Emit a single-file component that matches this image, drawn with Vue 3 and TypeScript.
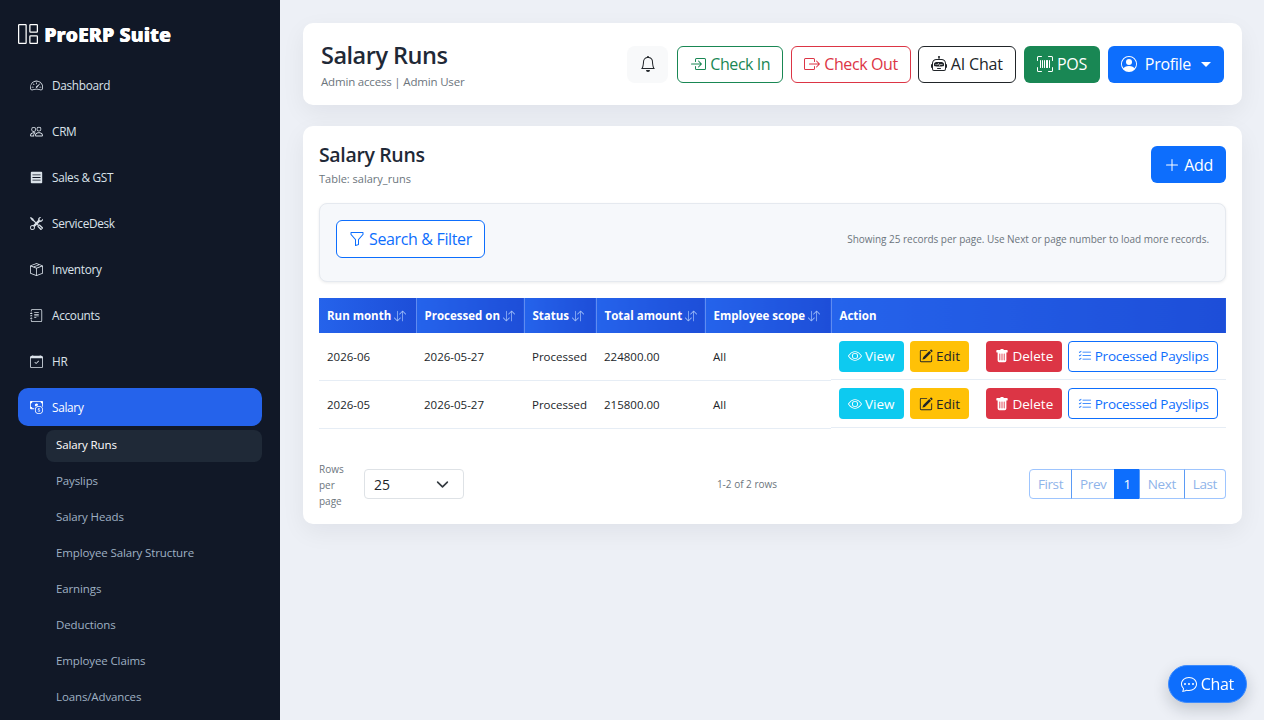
<script setup lang="ts">
import { ref } from 'vue'

type NavItem = { label: string; icon: string[]; active?: boolean }

const icons: Record<string, string[]> = {
  dashboard: [
    'M8 4a.5.5 0 0 1 .5.5V6a.5.5 0 0 1-1 0V4.5A.5.5 0 0 1 8 4zM3.732 5.732a.5.5 0 0 1 .707 0l.915.914a.5.5 0 1 1-.708.708l-.914-.915a.5.5 0 0 1 0-.707zM2 10a.5.5 0 0 1 .5-.5h1.586a.5.5 0 0 1 0 1H2.5A.5.5 0 0 1 2 10zm9.5 0a.5.5 0 0 1 .5-.5h1.5a.5.5 0 0 1 0 1H12a.5.5 0 0 1-.5-.5zm.754-4.246a.389.389 0 0 0-.527-.02L7.547 9.31a.91.91 0 1 0 1.302 1.258l3.434-4.297a.389.389 0 0 0-.029-.518z',
    'M0 10a8 8 0 1 1 15.547 2.661c-.442 1.253-1.845 1.602-2.932 1.25C11.309 13.488 9.475 13 8 13c-1.474 0-3.31.488-4.615.911-1.087.352-2.49.003-2.932-1.25A7.988 7.988 0 0 1 0 10zm8-7a7 7 0 0 0-6.603 9.329c.203.575.923.876 1.68.63C4.397 12.533 6.358 12 8 12s3.604.532 4.923.96c.757.245 1.477-.056 1.68-.631A7 7 0 0 0 8 3z',
  ],
  people: [
    'M15 14s1 0 1-1-1-4-5-4-5 3-5 4 1 1 1 1h8Zm-7.978-1A.261.261 0 0 1 7 12.996c.001-.264.167-1.03.76-1.72C8.312 10.629 9.282 10 11 10c1.717 0 2.687.63 3.24 1.276.593.69.758 1.457.76 1.72l-.008.002a.274.274 0 0 1-.014.002H7.022ZM11 7a2 2 0 1 0 0-4 2 2 0 0 0 0 4Zm3-2a3 3 0 1 1-6 0 3 3 0 0 1 6 0ZM6.936 9.28a5.88 5.88 0 0 0-1.23-.247A7.35 7.35 0 0 0 5 9c-4 0-5 3-5 4 0 .667.333 1 1 1h4.216A2.238 2.238 0 0 1 5 13c0-1.01.377-2.042 1.09-2.904.243-.294.526-.569.846-.816ZM4.92 10A5.493 5.493 0 0 0 4 13H1c0-.26.164-1.03.76-1.724.545-.636 1.492-1.256 3.16-1.275ZM1.5 5.5a3 3 0 1 1 6 0 3 3 0 0 1-6 0Zm3-2a2 2 0 1 0 0 4 2 2 0 0 0 0-4Z',
  ],
  sales: ['M1 2a1 1 0 0 1 1-1h12a1 1 0 0 1 1 1v12a1 1 0 0 1-1 1H2a1 1 0 0 1-1-1V2Zm2 2.2v1h10v-1H3Zm0 3.3v1h10v-1H3Zm0 3.3v1h10v-1H3Z'],
  tools: [
    'M1 0 0 1l2.2 3.081a1 1 0 0 0 .815.419h.07a1 1 0 0 1 .708.293l2.675 2.675-2.617 2.654A3.003 3.003 0 0 0 0 13a3 3 0 1 0 5.878-.851l2.654-2.617.968.968-.305.914a1 1 0 0 0 .242 1.023l3.27 3.27a.997.997 0 0 0 1.414 0l1.586-1.586a.997.997 0 0 0 0-1.414l-3.27-3.27a1 1 0 0 0-1.023-.242L10.5 9.5l-.96-.96 2.68-2.643A3.005 3.005 0 0 0 16 3c0-.269-.035-.53-.102-.777l-2.14 2.141L12 4l-.364-1.757L13.777.102a3 3 0 0 0-3.675 3.68L7.462 6.46 4.793 3.793a1 1 0 0 1-.293-.707v-.071a1 1 0 0 0-.419-.814L1 0Zm9.646 10.646a.5.5 0 0 1 .708 0l2.914 2.915a.5.5 0 0 1-.707.707l-2.915-2.914a.5.5 0 0 1 0-.708ZM3 11l.471.242.529.026.287.445.445.287.026.529L5 13l-.242.471-.026.529-.445.287-.287.445-.529.026L3 15l-.471-.242L2 14.732l-.287-.445L1.268 14l-.026-.529L1 13l.242-.471.026-.529.445-.287.287-.445.529-.026L3 11Z',
  ],
  box: [
    'M8.186 1.113a.5.5 0 0 0-.372 0L1.846 3.5l2.404.961L10.404 2l-2.218-.887zm3.564 1.426L5.596 5 8 5.961 14.154 3.5l-2.404-.961zm3.25 1.7-6.5 2.6v7.922l6.5-2.6V4.24zM7.5 14.762V6.838L1 4.239v7.925l6.5 2.6zM7.443.184a1.5 1.5 0 0 1 1.114 0l7.129 2.852A.5.5 0 0 1 16 3.5v8.662a1 1 0 0 1-.629.928l-7.185 2.874a.5.5 0 0 1-.372 0L.63 13.09a1 1 0 0 1-.63-.928V3.5a.5.5 0 0 1 .314-.464L7.443.184z',
  ],
  journal: [
    'M5 10.5a.5.5 0 0 1 .5-.5h2a.5.5 0 0 1 0 1h-2a.5.5 0 0 1-.5-.5zm0-2a.5.5 0 0 1 .5-.5h5a.5.5 0 0 1 0 1h-5a.5.5 0 0 1-.5-.5zm0-2a.5.5 0 0 1 .5-.5h5a.5.5 0 0 1 0 1h-5a.5.5 0 0 1-.5-.5zm0-2a.5.5 0 0 1 .5-.5h5a.5.5 0 0 1 0 1h-5a.5.5 0 0 1-.5-.5z',
    'M3 0h10a2 2 0 0 1 2 2v12a2 2 0 0 1-2 2H3a2 2 0 0 1-2-2v-1h1v1a1 1 0 0 0 1 1h10a1 1 0 0 0 1-1V2a1 1 0 0 0-1-1H3a1 1 0 0 0-1 1v1H1V2a2 2 0 0 1 2-2z',
    'M1 5v-.5a.5.5 0 0 1 1 0V5h.5a.5.5 0 0 1 0 1h-2a.5.5 0 0 1 0-1H1zm0 3v-.5a.5.5 0 0 1 1 0V8h.5a.5.5 0 0 1 0 1h-2a.5.5 0 0 1 0-1H1zm0 3v-.5a.5.5 0 0 1 1 0v.5h.5a.5.5 0 0 1 0 1h-2a.5.5 0 0 1 0-1H1z',
  ],
  calendar: [
    'M10.854 7.146a.5.5 0 0 1 0 .708l-3 3a.5.5 0 0 1-.708 0l-1.5-1.5a.5.5 0 1 1 .708-.708L7.5 9.793l2.646-2.647a.5.5 0 0 1 .708 0z',
    'M3.5 0a.5.5 0 0 1 .5.5V1h8V.5a.5.5 0 0 1 1 0V1h1a2 2 0 0 1 2 2v11a2 2 0 0 1-2 2H2a2 2 0 0 1-2-2V3a2 2 0 0 1 2-2h1V.5a.5.5 0 0 1 .5-.5zM1 4v10a1 1 0 0 0 1 1h12a1 1 0 0 0 1-1V4H1z',
  ],
  cash: [
    'M11 15a4 4 0 1 0 0-8 4 4 0 0 0 0 8zm5-4a5 5 0 1 1-10 0 5 5 0 0 1 10 0z',
    'M9.438 11.944c.047.596.518 1.06 1.363 1.116v.44h.375v-.443c.875-.061 1.386-.529 1.386-1.207 0-.618-.39-.936-1.09-1.1l-.296-.07v-1.2c.376.043.614.248.671.532h.658c-.047-.575-.54-1.024-1.329-1.073V8.5h-.375v.45c-.747.073-1.255.522-1.255 1.158 0 .562.378.92 1.007 1.066l.248.061v1.272c-.384-.058-.639-.27-.696-.563h-.668zm1.36-1.354c-.369-.085-.569-.26-.569-.522 0-.294.216-.514.572-.578v1.1h-.003zm.432.746c.449.104.655.272.655.569 0 .339-.257.571-.709.635v-1.195l.054.012z',
    'M1 0a1 1 0 0 0-1 1v8a1 1 0 0 0 1 1h4.083c.058-.344.145-.678.258-1H3a2 2 0 0 0-2-2V3a2 2 0 0 0 2-2h10a2 2 0 0 0 2 2v3.528c.38.34.717.728 1 1.154V1a1 1 0 0 0-1-1H1z',
    'M9.998 5.083 10 5a2 2 0 1 0-3.132 1.65 5.982 5.982 0 0 1 3.13-1.567z',
  ],
  brand: [
    'M6 1H1v14h5V1zm9 0h-5v5h5V1zm0 9v5h-5v-5h5zM0 1a1 1 0 0 1 1-1h5a1 1 0 0 1 1 1v14a1 1 0 0 1-1 1H1a1 1 0 0 1-1-1V1zm9 0a1 1 0 0 1 1-1h5a1 1 0 0 1 1 1v5a1 1 0 0 1-1 1h-5a1 1 0 0 1-1-1V1zm1 8a1 1 0 0 0-1 1v5a1 1 0 0 0 1 1h5a1 1 0 0 0 1-1v-5a1 1 0 0 0-1-1h-5z',
  ],
  bell: [
    'M8 16a2 2 0 0 0 2-2H6a2 2 0 0 0 2 2zM8 1.918l-.797.161A4.002 4.002 0 0 0 4 6c0 .628-.134 2.197-.459 3.742-.16.767-.376 1.566-.663 2.258h10.244c-.287-.692-.502-1.49-.663-2.258C12.134 8.197 12 6.628 12 6a4.002 4.002 0 0 0-3.203-3.92L8 1.917zM14.22 12c.223.447.481.801.78 1H1c.299-.199.557-.553.78-1C2.68 10.2 3 6.88 3 6c0-2.42 1.72-4.44 4.005-4.901a1 1 0 1 1 1.99 0A5.002 5.002 0 0 1 13 6c0 .88.32 4.2 1.22 6z',
  ],
  checkIn: [
    'M6 3.5a.5.5 0 0 1 .5-.5h8a.5.5 0 0 1 .5.5v9a.5.5 0 0 1-.5.5h-8a.5.5 0 0 1-.5-.5v-2a.5.5 0 0 0-1 0v2A1.5 1.5 0 0 0 6.5 14h8a1.5 1.5 0 0 0 1.5-1.5v-9A1.5 1.5 0 0 0 14.5 2h-8A1.5 1.5 0 0 0 5 3.5v2a.5.5 0 0 0 1 0v-2z',
    'M11.854 8.354a.5.5 0 0 0 0-.708l-3-3a.5.5 0 1 0-.708.708L10.293 7.5H1.5a.5.5 0 0 0 0 1h8.793l-2.147 2.146a.5.5 0 0 0 .708.708l3-3z',
  ],
  checkOut: [
    'M10 12.5a.5.5 0 0 1-.5.5h-8a.5.5 0 0 1-.5-.5v-9a.5.5 0 0 1 .5-.5h8a.5.5 0 0 1 .5.5v2a.5.5 0 0 0 1 0v-2A1.5 1.5 0 0 0 9.5 2h-8A1.5 1.5 0 0 0 0 3.5v9A1.5 1.5 0 0 0 1.5 14h8a1.5 1.5 0 0 0 1.5-1.5v-2a.5.5 0 0 0-1 0v2z',
    'M15.854 8.354a.5.5 0 0 0 0-.708l-3-3a.5.5 0 0 0-.708.708L14.293 7.5H5.5a.5.5 0 0 0 0 1h8.793l-2.147 2.146a.5.5 0 0 0 .708.708l3-3z',
  ],
  robot: [
    'M6 12.5a.5.5 0 0 1 .5-.5h3a.5.5 0 0 1 0 1h-3a.5.5 0 0 1-.5-.5ZM3 8.062C3 6.76 4.235 5.765 5.53 5.886a26.58 26.58 0 0 0 4.94 0C11.765 5.765 13 6.76 13 8.062v1.157a.933.933 0 0 1-.765.935c-.845.147-2.34.346-4.235.346-1.895 0-3.39-.2-4.235-.346A.933.933 0 0 1 3 9.219V8.062Zm4.542-.827a.25.25 0 0 0-.217.068l-.92.9a24.767 24.767 0 0 1-1.871-.183.25.25 0 0 0-.068.495c.55.076 1.232.149 2.02.193a.25.25 0 0 0 .189-.071l.754-.736.847 1.71a.25.25 0 0 0 .404.062l.932-.97a25.286 25.286 0 0 0 1.922-.188.25.25 0 0 0-.068-.495c-.538.074-1.207.145-1.98.189a.25.25 0 0 0-.166.076l-.754.785-.842-1.7a.25.25 0 0 0-.182-.135Z',
    'M8.5 1.866a1 1 0 1 0-1 0V3h-2A4.5 4.5 0 0 0 1 7.5V8a1 1 0 0 0-1 1v2a1 1 0 0 0 1 1v1a2 2 0 0 0 2 2h10a2 2 0 0 0 2-2v-1a1 1 0 0 0 1-1V9a1 1 0 0 0-1-1v-.5A4.5 4.5 0 0 0 10.5 3h-2V1.866ZM14 7.5V13a1 1 0 0 1-1 1H3a1 1 0 0 1-1-1V7.5A3.5 3.5 0 0 1 5.5 4h5A3.5 3.5 0 0 1 14 7.5Z',
  ],
  upc: [
    'M1.5 1a.5.5 0 0 0-.5.5v3a.5.5 0 0 1-1 0v-3A1.5 1.5 0 0 1 1.5 0h3a.5.5 0 0 1 0 1h-3zM11 .5a.5.5 0 0 1 .5-.5h3A1.5 1.5 0 0 1 16 1.5v3a.5.5 0 0 1-1 0v-3a.5.5 0 0 0-.5-.5h-3a.5.5 0 0 1-.5-.5zM.5 11a.5.5 0 0 1 .5.5v3a.5.5 0 0 0 .5.5h3a.5.5 0 0 1 0 1h-3A1.5 1.5 0 0 1 0 14.5v-3a.5.5 0 0 1 .5-.5zm15 0a.5.5 0 0 1 .5.5v3a1.5 1.5 0 0 1-1.5 1.5h-3a.5.5 0 0 1 0-1h3a.5.5 0 0 0 .5-.5v-3a.5.5 0 0 1 .5-.5zM3 4.5a.5.5 0 0 1 1 0v7a.5.5 0 0 1-1 0v-7zm2 0a.5.5 0 0 1 1 0v7a.5.5 0 0 1-1 0v-7zm2 0a.5.5 0 0 1 1 0v7a.5.5 0 0 1-1 0v-7zm2 0a.5.5 0 0 1 .5-.5h1a.5.5 0 0 1 .5.5v7a.5.5 0 0 1-.5.5h-1a.5.5 0 0 1-.5-.5v-7zm3 0a.5.5 0 0 1 1 0v7a.5.5 0 0 1-1 0v-7z',
  ],
  person: [
    'M11 6a3 3 0 1 1-6 0 3 3 0 0 1 6 0z',
    'M0 8a8 8 0 1 1 16 0A8 8 0 0 1 0 8zm8-7a7 7 0 0 0-5.468 11.37C3.242 11.226 4.805 10 8 10s4.757 1.225 5.468 2.37A7 7 0 0 0 8 1z',
  ],
  plus: ['M8 2a.5.5 0 0 1 .5.5v5h5a.5.5 0 0 1 0 1h-5v5a.5.5 0 0 1-1 0v-5h-5a.5.5 0 0 1 0-1h5v-5A.5.5 0 0 1 8 2Z'],
  funnel: [
    'M1.5 1.5A.5.5 0 0 1 2 1h12a.5.5 0 0 1 .5.5v2a.5.5 0 0 1-.128.334L10 8.692V13.5a.5.5 0 0 1-.342.474l-3 1A.5.5 0 0 1 6 14.5V8.692L1.628 3.834A.5.5 0 0 1 1.5 3.5v-2zm1 .5v1.308l4.372 4.858A.5.5 0 0 1 7 8.5v5.306l2-.666V8.5a.5.5 0 0 1 .128-.334L13.5 3.308V2h-11z',
  ],
  eye: [
    'M16 8s-3-5.5-8-5.5S0 8 0 8s3 5.5 8 5.5S16 8 16 8zM1.173 8a13.133 13.133 0 0 1 1.66-2.043C4.12 4.668 5.88 3.5 8 3.5c2.12 0 3.879 1.168 5.168 2.457A13.133 13.133 0 0 1 14.828 8c-.058.087-.122.183-.195.288-.335.48-.83 1.12-1.465 1.755C11.879 11.332 10.119 12.5 8 12.5c-2.12 0-3.879-1.168-5.168-2.457A13.134 13.134 0 0 1 1.172 8z',
    'M8 5.5a2.5 2.5 0 1 0 0 5 2.5 2.5 0 0 0 0-5zM4.5 8a3.5 3.5 0 1 1 7 0 3.5 3.5 0 0 1-7 0z',
  ],
  edit: [
    'M15.502 1.94a.5.5 0 0 1 0 .706L14.459 3.69l-2-2L13.502.646a.5.5 0 0 1 .707 0l1.293 1.293zm-1.75 2.456-2-2L4.939 9.21a.5.5 0 0 0-.121.196l-.805 2.414a.25.25 0 0 0 .316.316l2.414-.805a.5.5 0 0 0 .196-.12l6.813-6.814z',
    'M1 13.5A1.5 1.5 0 0 0 2.5 15h11a1.5 1.5 0 0 0 1.5-1.5v-6a.5.5 0 0 0-1 0v6a.5.5 0 0 1-.5.5h-11a.5.5 0 0 1-.5-.5v-11a.5.5 0 0 1 .5-.5H9a.5.5 0 0 0 0-1H2.5A1.5 1.5 0 0 0 1 2.5v11z',
  ],
  trash: [
    'M2.5 1a1 1 0 0 0-1 1v1a1 1 0 0 0 1 1H3v9a2 2 0 0 0 2 2h6a2 2 0 0 0 2-2V4h.5a1 1 0 0 0 1-1V2a1 1 0 0 0-1-1H10a1 1 0 0 0-1-1H7a1 1 0 0 0-1 1H2.5zm3 4a.5.5 0 0 1 .5.5v7a.5.5 0 0 1-1 0v-7a.5.5 0 0 1 .5-.5zM8 5a.5.5 0 0 1 .5.5v7a.5.5 0 0 1-1 0v-7A.5.5 0 0 1 8 5zm3 .5v7a.5.5 0 0 1-1 0v-7a.5.5 0 0 1 1 0z',
  ],
  listCheck: [
    'M5 11.5a.5.5 0 0 1 .5-.5h9a.5.5 0 0 1 0 1h-9a.5.5 0 0 1-.5-.5zm0-4a.5.5 0 0 1 .5-.5h9a.5.5 0 0 1 0 1h-9a.5.5 0 0 1-.5-.5zm0-4a.5.5 0 0 1 .5-.5h9a.5.5 0 0 1 0 1h-9a.5.5 0 0 1-.5-.5zM3.854 2.146a.5.5 0 0 1 0 .708l-1.5 1.5a.5.5 0 0 1-.708 0l-.5-.5a.5.5 0 1 1 .708-.708L2 3.293l1.146-1.147a.5.5 0 0 1 .708 0zm0 4a.5.5 0 0 1 0 .708l-1.5 1.5a.5.5 0 0 1-.708 0l-.5-.5a.5.5 0 1 1 .708-.708L2 7.293l1.146-1.147a.5.5 0 0 1 .708 0zm0 4a.5.5 0 0 1 0 .708l-1.5 1.5a.5.5 0 0 1-.708 0l-.5-.5a.5.5 0 0 1 .708-.708l.146.147 1.146-1.147a.5.5 0 0 1 .708 0z',
  ],
  chat: [
    'M5 8a1 1 0 1 1-2 0 1 1 0 0 1 2 0zm4 0a1 1 0 1 1-2 0 1 1 0 0 1 2 0zm3 1a1 1 0 1 0 0-2 1 1 0 0 0 0 2z',
    'm2.165 15.803.02-.004c1.83-.363 2.948-.842 3.468-1.105A9.06 9.06 0 0 0 8 15c4.418 0 8-3.134 8-7s-3.582-7-8-7-8 3.134-8 7c0 1.76.743 3.37 1.97 4.6a10.437 10.437 0 0 1-.524 2.318l-.003.011a10.722 10.722 0 0 1-.244.637c-.079.186.074.394.273.362a21.673 21.673 0 0 0 .693-.125zm.8-3.108a1 1 0 0 0-.287-.801C1.618 10.83 1 9.468 1 8c0-3.192 3.004-6 7-6s7 2.808 7 6c0 3.193-3.004 6-7 6a8.06 8.06 0 0 1-2.088-.272 1 1 0 0 0-.711.074c-.387.196-1.24.57-2.634.893a10.97 10.97 0 0 0 .398-2z',
  ],
  sort: [
    'M11.5 15a.5.5 0 0 0 .5-.5V2.707l3.146 3.147a.5.5 0 0 0 .708-.708l-4-4a.5.5 0 0 0-.708 0l-4 4a.5.5 0 1 0 .708.708L11 2.707V14.5a.5.5 0 0 0 .5.5zm-7-14a.5.5 0 0 1 .5.5v11.793l3.146-3.147a.5.5 0 0 1 .708.708l-4 4a.5.5 0 0 1-.708 0l-4-4a.5.5 0 0 1 .708-.708L4 13.293V1.5a.5.5 0 0 1 .5-.5z',
  ],
}

const navItems: NavItem[] = [
  { label: 'Dashboard', icon: icons.dashboard },
  { label: 'CRM', icon: icons.people },
  { label: 'Sales & GST', icon: icons.sales },
  { label: 'ServiceDesk', icon: icons.tools },
  { label: 'Inventory', icon: icons.box },
  { label: 'Accounts', icon: icons.journal },
  { label: 'HR', icon: icons.calendar },
  { label: 'Salary', icon: icons.cash, active: true },
]

const subItems = [
  'Salary Runs',
  'Payslips',
  'Salary Heads',
  'Employee Salary Structure',
  'Earnings',
  'Deductions',
  'Employee Claims',
  'Loans/Advances',
]

const columns = ['Run month', 'Processed on', 'Status', 'Total amount', 'Employee scope']

const rows = ref([
  { month: '2026-06', processed: '2026-05-27', status: 'Processed', total: '224800.00', scope: 'All' },
  { month: '2026-05', processed: '2026-05-27', status: 'Processed', total: '215800.00', scope: 'All' },
])

const pages = ['First', 'Prev', '1', 'Next', 'Last']
</script>

<template>
  <div class="shell">
    <aside class="sidebar">
      <div class="brand">
        <svg class="brand-icon" viewBox="0 0 16 16"><path v-for="d in icons.brand" :key="d" :d="d" /></svg>
        <span>ProERP Suite</span>
      </div>
      <nav class="nav">
        <a v-for="item in navItems" :key="item.label" class="nav-link" :class="{ active: item.active }">
          <svg class="ico" viewBox="0 0 16 16"><path v-for="d in item.icon" :key="d" :d="d" /></svg>
          {{ item.label }}
        </a>
        <div class="subnav">
          <a v-for="(sub, i) in subItems" :key="sub" class="sub-link" :class="{ current: i === 0 }">{{ sub }}</a>
        </div>
      </nav>
    </aside>

    <main class="main">
      <header class="card topbar">
        <div>
          <h1>Salary Runs</h1>
          <div class="muted">Admin access | Admin User</div>
        </div>
        <div class="top-actions">
          <button class="bell">
            <svg class="ico" viewBox="0 0 16 16"><path v-for="d in icons.bell" :key="d" :d="d" /></svg>
          </button>
          <button class="btn out-green">
            <svg class="ico" viewBox="0 0 16 16"><path v-for="d in icons.checkIn" :key="d" :d="d" /></svg>
            Check In
          </button>
          <button class="btn out-red">
            <svg class="ico" viewBox="0 0 16 16"><path v-for="d in icons.checkOut" :key="d" :d="d" /></svg>
            Check Out
          </button>
          <button class="btn out-dark">
            <svg class="ico" viewBox="0 0 16 16"><path v-for="d in icons.robot" :key="d" :d="d" /></svg>
            AI Chat
          </button>
          <button class="btn pos">
            <svg class="ico" viewBox="0 0 16 16"><path v-for="d in icons.upc" :key="d" :d="d" /></svg>
            POS
          </button>
          <button class="btn profile">
            <svg class="ico" viewBox="0 0 16 16"><path v-for="d in icons.person" :key="d" :d="d" /></svg>
            Profile
            <span class="caret"></span>
          </button>
        </div>
      </header>

      <section class="card content">
        <div class="content-head">
          <div>
            <h2>Salary Runs</h2>
            <div class="muted small">Table: salary_runs</div>
          </div>
          <button class="btn add">
            <svg class="ico" viewBox="0 0 16 16"><path v-for="d in icons.plus" :key="d" :d="d" fill-rule="evenodd" /></svg>
            Add
          </button>
        </div>

        <div class="filter">
          <button class="btn out-blue">
            <svg class="ico" viewBox="0 0 16 16"><path v-for="d in icons.funnel" :key="d" :d="d" /></svg>
            Search &amp; Filter
          </button>
          <span class="filter-note">Showing 25 records per page. Use Next or page number to load more records.</span>
        </div>

        <table class="grid">
          <thead>
            <tr>
              <th v-for="col in columns" :key="col">
                {{ col }}
                <svg class="sort" viewBox="0 0 16 16"><path v-for="d in icons.sort" :key="d" :d="d" /></svg>
              </th>
              <th>Action</th>
            </tr>
          </thead>
          <tbody>
            <tr v-for="row in rows" :key="row.month">
              <td>{{ row.month }}</td>
              <td>{{ row.processed }}</td>
              <td>{{ row.status }}</td>
              <td>{{ row.total }}</td>
              <td>{{ row.scope }}</td>
              <td class="actions">
                <button class="act view"><svg class="ico" viewBox="0 0 16 16"><path v-for="d in icons.eye" :key="d" :d="d" /></svg>View</button>
                <button class="act edit"><svg class="ico" viewBox="0 0 16 16"><path v-for="d in icons.edit" :key="d" :d="d" /></svg>Edit</button>
                <button class="act del"><svg class="ico" viewBox="0 0 16 16"><path v-for="d in icons.trash" :key="d" :d="d" /></svg>Delete</button>
                <button class="act slips"><svg class="ico" viewBox="0 0 16 16"><path v-for="d in icons.listCheck" :key="d" :d="d" /></svg>Processed Payslips</button>
              </td>
            </tr>
          </tbody>
        </table>

        <div class="pager-row">
          <div class="rows-per">
            <span class="rows-label">Rows per page</span>
            <div class="select">
              25
              <svg class="chev" viewBox="0 0 16 16"><path fill="none" stroke="#343a40" stroke-linecap="round" stroke-linejoin="round" stroke-width="2" d="m2 5 6 6 6-6" /></svg>
            </div>
          </div>
          <div class="range">1-2 of 2 rows</div>
          <div class="pager">
            <span v-for="p in pages" :key="p" class="page" :class="{ on: p === '1' }">{{ p }}</span>
          </div>
        </div>
      </section>
    </main>

    <button class="chat-fab">
      <svg class="ico" viewBox="0 0 16 16"><path v-for="d in icons.chat" :key="d" :d="d" /></svg>
      Chat
    </button>
  </div>
</template>

<style>
html,
body {
  margin: 0;
  height: 100%;
  overflow: hidden;
}
</style>

<style scoped>
.shell {
  display: flex;
  height: 720px;
  overflow: hidden;
  background: #edf0f6;
  font-family: "Open Sans", "Noto Sans", sans-serif;
  color: #212529;
}

button {
  font-family: inherit;
  cursor: pointer;
}

.ico {
  width: 1em;
  height: 1em;
  fill: currentColor;
  flex: none;
}

.sidebar {
  width: 280px;
  flex: none;
  box-sizing: border-box;
  padding: 0 18px;
  background: #111827;
  overflow: hidden;
}

.brand {
  display: flex;
  align-items: center;
  gap: 6px;
  height: 66px;
  padding-top: 2px;
  box-sizing: border-box;
  color: #fff;
  font-size: 19.5px;
  font-weight: 800;
  text-shadow: 0.4px 0 0 #fff;
}

.brand-icon {
  width: 20px;
  height: 20px;
  fill: #fff;
  fill-rule: evenodd;
}

.nav {
  display: flex;
  flex-direction: column;
}

.nav-link {
  display: flex;
  align-items: center;
  gap: 9px;
  height: 38px;
  margin-bottom: 8px;
  padding: 0 12px;
  border-radius: 10px;
  color: #dbe2ea;
  font-size: 11.8px;
  letter-spacing: -0.3px;
}

.nav-link .ico {
  font-size: 13px;
}

.nav-link.active {
  background: #2563eb;
  color: #fff;
  margin-bottom: 4px;
}

.subnav {
  display: flex;
  flex-direction: column;
  gap: 4px;
  margin-left: 28px;
}

.sub-link {
  display: flex;
  align-items: center;
  height: 32px;
  box-sizing: border-box;
  padding: 0 10px 3px;
  border-radius: 8px;
  color: #9fb0c3;
  font-size: 11.5px;
  letter-spacing: -0.12px;
}

.sub-link.current {
  background: #1f2937;
  color: #fff;
}

.main {
  flex: 1;
  min-width: 0;
  padding: 23px 22px 0 23px;
}

.card {
  background: #fff;
  border-radius: 10px;
  box-shadow: 0 8px 24px rgba(15, 23, 42, 0.06);
}

.topbar {
  display: flex;
  align-items: center;
  justify-content: space-between;
  height: 82px;
  box-sizing: border-box;
  padding: 0 18px;
  margin-bottom: 21px;
}

h1 {
  margin: 0 0 4px;
  font-size: 23.5px;
  line-height: 30px;
  font-weight: 600;
  letter-spacing: -0.5px;
  color: #1f2937;
}

h2 {
  margin: 0 0 7px;
  font-size: 19.5px;
  line-height: 18px;
  font-weight: 600;
  letter-spacing: -0.35px;
  color: #1f2937;
}

.muted {
  color: #6c757d;
  font-size: 11.5px;
  letter-spacing: -0.18px;
}

.muted.small {
  font-size: 11px;
  letter-spacing: 0;
}

.top-actions {
  display: flex;
  align-items: center;
  gap: 8px;
}

.bell {
  display: flex;
  align-items: center;
  justify-content: center;
  width: 41px;
  height: 37px;
  margin-right: 1px;
  border: 0;
  border-radius: 8px;
  background: #f8f9fa;
  color: #212529;
  font-size: 16px;
}

.btn {
  display: inline-flex;
  align-items: center;
  gap: 4px;
  height: 37px;
  box-sizing: border-box;
  padding: 0 12px;
  border: 1px solid transparent;
  border-radius: 6px;
  background: #fff;
  font-size: 16px;
  letter-spacing: -0.3px;
  white-space: nowrap;
}

.out-green {
  border-color: #198754;
  color: #198754;
  letter-spacing: -0.43px;
}

.out-red {
  margin-right: -1px;
  border-color: #dc3545;
  color: #dc3545;
  letter-spacing: -0.4px;
}

.out-dark {
  border-color: #212529;
  color: #212529;
  letter-spacing: -0.15px;
}

.pos {
  background: #198754;
  color: #fff;
}

.profile {
  gap: 8px;
  background: #0d6efd;
  color: #fff;
}

.caret {
  width: 0;
  height: 0;
  margin-left: 2px;
  border-top: 5px solid #fff;
  border-left: 5px solid transparent;
  border-right: 5px solid transparent;
}

.content {
  box-sizing: border-box;
  height: 398px;
  padding: 20px 16px;
}

.content-head {
  display: flex;
  justify-content: space-between;
  align-items: flex-start;
  margin-bottom: 17px;
}

.add {
  background: #0d6efd;
  color: #fff;
}

.filter {
  display: flex;
  align-items: center;
  justify-content: space-between;
  height: 79px;
  box-sizing: border-box;
  padding: 0 16px 8px;
  margin-bottom: 16px;
  background: #f6f8fb;
  border: 1px solid #e5e9ef;
  border-radius: 8px;
  box-shadow: 0 1px 3px rgba(15, 23, 42, 0.08);
}

.out-blue {
  height: 38px;
  border-color: #0d6efd;
  color: #0d6efd;
  letter-spacing: -0.35px;
}

.filter-note {
  font-size: 10px;
  letter-spacing: -0.03px;
  color: #6c757d;
}

.grid {
  width: 100%;
  table-layout: fixed;
  border-collapse: collapse;
  font-size: 11.5px;
}

.grid th {
  height: 35px;
  box-sizing: border-box;
  padding: 0 8px;
  background: linear-gradient(90deg, #2563eb, #1d4ed8);
  border-right: 1px solid #5f8bf0;
  color: #fff;
  font-weight: 700;
  text-align: left;
  white-space: nowrap;
  overflow: hidden;
}

.grid th:nth-child(1) {
  width: 97px;
}

.grid th:nth-child(2) {
  width: 108px;
}

.grid th:nth-child(3) {
  width: 72px;
}

.grid th:nth-child(4) {
  width: 109px;
}

.grid th:nth-child(5) {
  width: 126px;
}

.grid th:last-child {
  border-right: 0;
}

.sort {
  width: 12px;
  height: 12px;
  fill: #9dbbf7;
  vertical-align: -2px;
}

.grid td {
  height: 47px;
  padding: 0 8px;
  border-bottom: 1px solid #e6edf5;
  white-space: nowrap;
}

.grid td.actions {
  display: flex;
  align-items: center;
  gap: 6px;
  height: 47px;
  box-sizing: border-box;
}

.act {
  display: inline-flex;
  align-items: center;
  gap: 3px;
  height: 31px;
  box-sizing: border-box;
  padding: 0 8px;
  border: 1px solid transparent;
  border-radius: 4px;
  font-size: 13.5px;
  white-space: nowrap;
}

.act .ico {
  font-size: 14px;
}

.view {
  background: #0dcaf0;
  color: #fff;
}

.edit {
  padding: 0 8.5px;
  background: #ffc107;
  color: #212529;
  margin-right: 11px;
}

.del {
  background: #dc3545;
  color: #fff;
}

.slips {
  padding: 0 8.5px;
  background: #fff;
  border-color: #0d6efd;
  color: #0d6efd;
  letter-spacing: -0.25px;
}

.pager-row {
  display: flex;
  align-items: center;
  justify-content: space-between;
  margin-top: 31px;
}

.rows-per {
  display: flex;
  align-items: center;
  gap: 8px;
}

.rows-label {
  width: 37px;
  padding-top: 1px;
  margin-bottom: -1px;
  font-size: 10px;
  line-height: 16px;
  color: #6c757d;
}

.select {
  display: flex;
  align-items: center;
  justify-content: space-between;
  width: 100px;
  height: 30px;
  box-sizing: border-box;
  padding: 0 14px 0 9px;
  border: 1px solid #dee2e6;
  border-radius: 4px;
  font-size: 14px;
}

.chev {
  width: 13px;
  height: 13px;
}

.range {
  font-size: 10px;
  color: #6c757d;
}

.pager {
  display: flex;
  justify-content: flex-end;
}

.page {
  display: flex;
  align-items: center;
  height: 30px;
  box-sizing: border-box;
  padding: 0 8px;
  border: 1px solid #9ec5fe;
  border-left-color: #5b9bf5;
  margin-left: -1px;
  color: #8fb4ea;
  font-size: 13.5px;
  letter-spacing: -0.4px;
  background: #fff;
}

.page:first-child {
  border-left-color: #9ec5fe;
  border-radius: 4px 0 0 4px;
}

.page:last-child {
  border-radius: 0 4px 4px 0;
}

.page.on {
  background: #0d6efd;
  border-color: #0d6efd;
  color: #fff;
}

.chat-fab {
  position: fixed;
  right: 17px;
  bottom: 17px;
  display: flex;
  align-items: center;
  gap: 4px;
  height: 38px;
  padding: 0 12px;
  border: 1px solid #3d8bfd;
  border-radius: 19px;
  background: #0d6efd;
  color: #fff;
  font-size: 16px;
  letter-spacing: -0.3px;
  box-shadow: 0 6px 16px rgba(15, 23, 42, 0.2);
}
</style>
